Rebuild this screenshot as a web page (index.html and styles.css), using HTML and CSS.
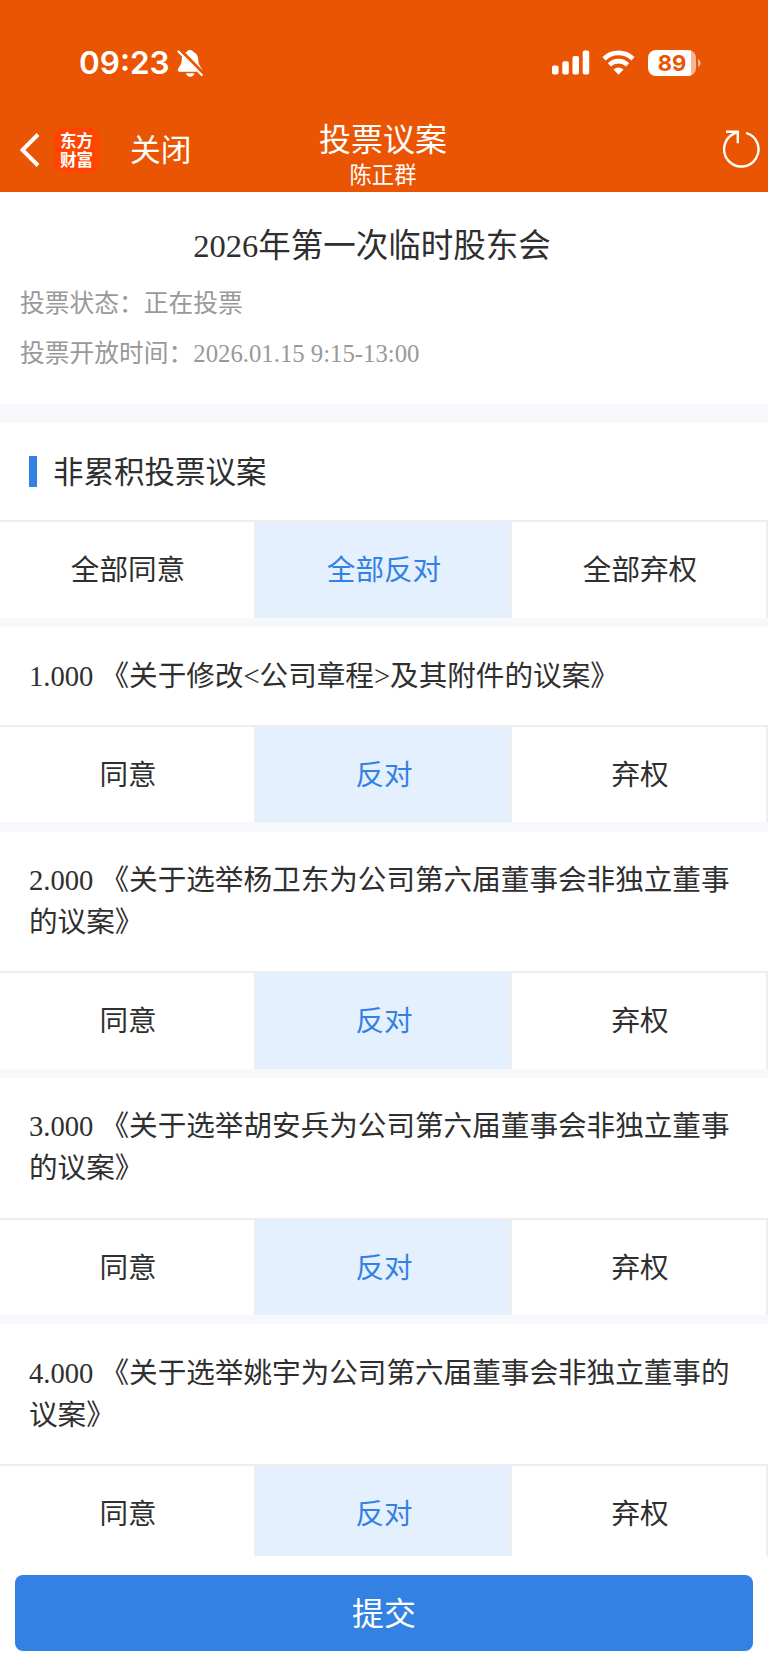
FILE: index.html
```html
<!DOCTYPE html>
<html lang="zh-CN">
<head>
<meta charset="utf-8">
<meta name="viewport" content="width=device-width, initial-scale=1">
<title>投票议案</title>
<link rel="stylesheet" href="styles.css">
</head>
<body>
<div class="app">
  <header class="header">
    <div class="status">
      <div class="status-left">
        <span class="clock">09:23</span>
        <svg class="bell" viewBox="0 0 26 28" width="26" height="28">
          <path d="M13 1c-1.900-.2-3 1-3.300 2C5.500 4.300 4.800 8 4.700 11.500 4.600 16 1.200 18.500.8 21c-.1 1.200.6 1.700 1.500 1.700h21.500c1 0 1.700-.7 1.400-1.700-.5-2.500-3.800-4.500-3.900-9.500C21.200 8 20.300 4.300 16.300 3 16 2 15.200 1 13 1z" fill="#fff"/>
          <path d="M9 24.200h8.400c-.4 2.200-1.900 3.600-4.200 3.600S9.400 26.400 9 24.200z" fill="#fff"/>
          <path d="M2.500 1l24 24.500" stroke="#ea5504" stroke-width="4.500"/>
          <path d="M1.500 2.500l23.300 23.500" stroke="#fff" stroke-width="2.200" stroke-linecap="round"/>
        </svg>
      </div>
      <div class="status-right">
        <svg width="38" height="25" viewBox="0 0 38 25" fill="#fff">
          <rect x="0" y="15.500" width="6.500" height="9" rx="1.800"/>
          <rect x="10.300" y="11.200" width="6.500" height="13.300" rx="1.800"/>
          <rect x="20.500" y="6" width="6.500" height="18.500" rx="1.800"/>
          <rect x="30.700" y="0.500" width="6.500" height="24" rx="1.800"/>
        </svg>
        <svg class="wifi" width="33" height="25" viewBox="0 0 33 25" fill="none" stroke="#fff" stroke-width="4.600">
          <path d="M2 8.700c8.300-7.800 20.700-7.800 29 0"/>
          <path d="M7.400 14.800c5.200-4.900 13-4.900 18.200 0"/>
          <path d="M11.500 19.600c2.800-2.700 7.200-2.700 10 0L16.500 24.700z" fill="#fff" stroke="none"/>
        </svg>
        <div class="battery"><span class="battery-level">89</span></div>
        <svg class="cap" width="3" height="8" viewBox="0 0 3 8"><path d="M0 0c3.500 1.500 3.500 6.500 0 8z" fill="#f7b795"/></svg>
      </div>
    </div>
    <nav class="nav">
      <div class="nav-left">
        <svg class="back" width="20" height="34" viewBox="0 0 20 34"><path d="M18 1.500L2.500 17 18 32.500" fill="none" stroke="#fff" stroke-width="4"/></svg>
        <div class="logo">东方<br>财富</div>
        <span class="close">关闭</span>
      </div>
      <div class="nav-title">
        <h1 class="title">投票议案</h1>
        <span class="user">陈正群</span>
      </div>
      <div class="nav-right">
        <svg width="38" height="38" viewBox="0 0 38 38" fill="none" stroke="#fff" stroke-width="2.400">
          <path d="M23.100 2.800a17.200 17.200 0 1 1-12 .9L14.500 2"/>
          <path d="M3 1.700h11.800v11.600"/>
        </svg>
      </div>
    </nav>
  </header>

  <main class="content">
    <section class="meeting">
      <h2 class="meeting-title">2026年第一次临时股东会</h2>
      <p class="meta">投票状态：正在投票</p>
      <p class="meta">投票开放时间：2026.01.15 9:15-13:00</p>
    </section>

    <section class="block">
      <h3 class="section-title">非累积投票议案</h3>
      <div class="options">
        <div class="option">全部同意</div><div class="option selected">全部反对</div><div class="option">全部弃权</div>
      </div>
    </section>
    <section class="block">
      <p class="proposal">1.000 《关于修改&lt;公司章程&gt;及其附件的议案》</p>
      <div class="options">
        <div class="option">同意</div><div class="option selected">反对</div><div class="option">弃权</div>
      </div>
    </section>
    <section class="block">
      <p class="proposal">2.000 《关于选举杨卫东为公司第六届董事会非独立董事的议案》</p>
      <div class="options">
        <div class="option">同意</div><div class="option selected">反对</div><div class="option">弃权</div>
      </div>
    </section>
    <section class="block">
      <p class="proposal">3.000 《关于选举胡安兵为公司第六届董事会非独立董事的议案》</p>
      <div class="options">
        <div class="option">同意</div><div class="option selected">反对</div><div class="option">弃权</div>
      </div>
    </section>
    <section class="block">
      <p class="proposal">4.000 《关于选举姚宇为公司第六届董事会非独立董事的议案》</p>
      <div class="options">
        <div class="option">同意</div><div class="option selected">反对</div><div class="option">弃权</div>
      </div>
    </section>
  </main>

  <footer class="footer"><button class="submit">提交</button></footer>
</div>
</body>
</html>
```
FILE: styles.css
```css
* { box-sizing: border-box; margin: 0; padding: 0; }

body {
  background: #fff;
  color: #2f2f2f;
  font-family: "Liberation Serif", "Noto Sans CJK SC", serif;
  text-spacing-trim: space-all;
}

.app { display: flex; flex-direction: column; width: 768px; height: 1670px; overflow: hidden; }

.header { flex: none; height: 192px; background: #ea5504; color: #fff; }

.status { display: flex; justify-content: space-between; height: 108px; padding: 48px 67px 0 79px; }
.status-left, .status-right { display: flex; align-items: center; height: 30px; }
.status-right { padding-bottom: 1px; }
.clock { font: 600 31.500px/30px Inter, sans-serif; width: 91px; white-space: nowrap; }
.bell { margin-left: 7px; }
.wifi { margin: 0 13px 0 12px; }
.battery {
  width: 48px; height: 26px; border-radius: 8px;
  background: linear-gradient(to right, #fff 43px, #f7b795 43px);
}
.battery-level { display: block; color: #ea5504; font: 700 22px/26px Inter, sans-serif; text-align: center; }
.cap { margin-left: 2px; }

.nav { display: grid; grid-template-columns: 1fr auto 1fr; height: 84px; }
.nav-left { display: flex; align-items: center; height: 84px; padding-left: 20px; }
.logo {
  width: 45px; height: 45px; margin-left: 14px; padding-top: 3px; border-radius: 9px; text-align: center;
  background: #ff4500; font: 700 16.500px/19px "Noto Sans CJK SC", sans-serif;
}
.close { margin: 2px 0 0 31px; font-size: 30.700px; line-height: 40px; }
.nav-title { display: flex; flex-direction: column; align-items: center; padding: 11px 2px 0 0; }
.title { font-size: 32px; font-weight: 400; line-height: 42px; }
.user { margin-top: 1px; font-size: 22.300px; line-height: 28px; }
.nav-right { display: flex; justify-content: flex-end; align-items: flex-start; padding: 22px 7px 0 0; }

.content { flex: 1; min-height: 0; overflow: hidden; }
.meeting { height: 231px; padding: 30px 20px 0; border-bottom: 19px solid #f6f8fb; }
.meeting-title {
  padding-right: 24px; margin-bottom: 9px;
  font-size: 32.500px; font-weight: 400; line-height: 48px; text-align: center;
}
.meta { color: #999; font-size: 24.750px; line-height: 50px; }

.block { padding-bottom: 9.400px; background: #f6f8fb; }
.section-title {
  display: flex; align-items: center; height: 97.400px; padding: 0 29px 3px;
  background: #fff; font-size: 30.500px; font-weight: 400;
}
.section-title::before { content: ""; width: 8px; height: 31px; margin: 2px 16px 0 0; background: #3381e3; }
.proposal { padding: 28.400px 27px 27.100px 29px; background: #fff; font-size: 28.600px; line-height: 42px; }

.options {
  display: grid; grid-template-columns: repeat(3, 1fr); height: 97.500px;
  border-top: 2px solid #eee; background: #fff;
}
.option {
  display: flex; align-items: center; justify-content: center;
  padding: 0 0 4.500px 2px; border-right: 2px solid #eee; font-size: 28.600px;
}
.selected { background: #e4f0fe; color: #3381e3; }

.footer { flex: none; height: 114px; padding: 19px 15px; background: #fff; }
.submit {
  display: block; width: 100%; height: 76px; padding-bottom: 4px; border: 0; border-radius: 8px;
  background: #3381e3; color: #fff; font: 400 32px/72px "Noto Sans CJK SC", sans-serif;
}
```
